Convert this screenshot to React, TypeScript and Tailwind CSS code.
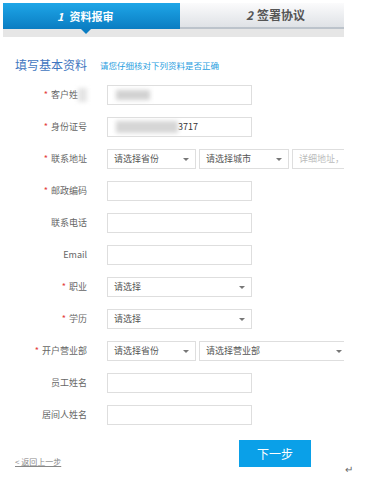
import React from "react";

const Caret = () => (
  <span className="block shrink-0 w-0 h-0 border-l-[3px] border-r-[3px] border-t-[3px] border-l-transparent border-r-transparent border-t-[#777]" />
);

const Label = ({ req, children }: { req?: boolean; children: React.ReactNode }) => (
  <div className="w-[87px] shrink-0 flex justify-end items-center text-[9px] text-[#666] whitespace-nowrap">
    {req && <span className="text-[#e4393c] mr-[3px] text-[9px]">*</span>}
    {children}
  </div>
);

const Input = ({ children }: { children?: React.ReactNode }) => (
  <div className="w-[145px] shrink-0 h-[20px] border border-[#dedede] bg-white flex items-center px-[5px] text-[9px] text-[#333] overflow-hidden whitespace-nowrap">
    {children}
  </div>
);

const Select = ({ text, w, caret = true, light }: { text: string; w: string; caret?: boolean; light?: boolean }) => (
  <div className={`${w} shrink-0 h-[20px] border border-[#dedede] bg-white flex items-center justify-between pl-[6px] pr-[6px] text-[9px] overflow-hidden whitespace-nowrap`}>
    <span className={light ? "text-[#bbb]" : "text-[#555]"}>{text}</span>
    {caret && <Caret />}
  </div>
);

const Row = ({ children }: { children: React.ReactNode }) => (
  <div className="h-[32px] flex items-center">{children}</div>
);

export default function App() {
  return (
    <div
      className="relative w-[392px] h-[480px] bg-white overflow-hidden"
      style={{ fontFamily: '"Noto Sans CJK SC", "Noto Sans", sans-serif' }}
    >
      {/* Tabs */}
      <div className="relative ml-[3px] mt-[3px] w-[341px]">
        <div className="flex h-[26px]">
          <div className="w-[177px] h-full bg-gradient-to-b from-[#1ea6e8] to-[#0a7dc2] flex items-center pl-[54px] text-white text-[11px] font-bold">
            <span className="italic mr-[6px]">1</span>
            <span>资料报审</span>
          </div>
          <div className="flex-1 h-full bg-gradient-to-b from-[#fbfbfc] to-[#dfe2e6] border-b-[2px] border-[#bcc3cb] flex items-center pl-[66px] text-[#555] text-[12px] font-bold">
            <span className="italic mr-[4px]">2</span>
            <span>签署协议</span>
          </div>
        </div>
        <div className="h-[8px] bg-[#e6e6e6]" />
        <span className="absolute left-[78px] top-[26px] w-0 h-0 border-l-[5px] border-r-[5px] border-t-[5px] border-l-transparent border-r-transparent border-t-[#0a7dc2]" />
      </div>

      {/* Heading */}
      <div className="mt-[18px] ml-[15px] h-[20px] flex items-center">
        <span className="text-[12px] text-[#3f76c0] leading-none">填写基本资料</span>
        <span className="ml-[13px] text-[8.5px] text-[#2aa0e0] leading-none">请您仔细核对下列资料是否正确</span>
      </div>

      {/* Form */}
      <div className="mt-[4px] w-[344px] overflow-hidden">
        <Row>
          <Label req>
            客户姓
            <span className="inline-block w-[9px] h-[14px] bg-[#e4e4e4] blur-[2px]" />
          </Label>
          <div className="ml-[20px]">
            <Input>
              <span className="ml-[3px] inline-block w-[34px] h-[10px] bg-[#d2d2d2] blur-[2px]" />
            </Input>
          </div>
        </Row>
        <Row>
          <Label req>身份证号</Label>
          <div className="ml-[20px]">
            <Input>
              <span className="ml-[3px] inline-block w-[62px] h-[12px] bg-[#d6d6d6] blur-[2px]" />
              <span>3717</span>
            </Input>
          </div>
        </Row>
        <Row>
          <Label req>联系地址</Label>
          <div className="ml-[20px] flex gap-[3px]">
            <Select w="w-[89px]" text="请选择省份" />
            <Select w="w-[90px]" text="请选择城市" />
            <Select w="w-[60px]" text="详细地址，不" caret={false} light />
          </div>
        </Row>
        <Row>
          <Label req>邮政编码</Label>
          <div className="ml-[20px]">
            <Input />
          </div>
        </Row>
        <Row>
          <Label>联系电话</Label>
          <div className="ml-[20px]">
            <Input />
          </div>
        </Row>
        <Row>
          <Label>Email</Label>
          <div className="ml-[20px]">
            <Input />
          </div>
        </Row>
        <Row>
          <Label req>职业</Label>
          <div className="ml-[20px]">
            <Select w="w-[145px]" text="请选择" />
          </div>
        </Row>
        <Row>
          <Label req>学历</Label>
          <div className="ml-[20px]">
            <Select w="w-[145px]" text="请选择" />
          </div>
        </Row>
        <Row>
          <Label req>开户营业部</Label>
          <div className="ml-[20px] flex gap-[3px]">
            <Select w="w-[89px]" text="请选择省份" />
            <Select w="w-[150px]" text="请选择营业部" />
          </div>
        </Row>
        <Row>
          <Label>员工姓名</Label>
          <div className="ml-[20px]">
            <Input />
          </div>
        </Row>
        <Row>
          <Label>居间人姓名</Label>
          <div className="ml-[20px]">
            <Input />
          </div>
        </Row>
      </div>

      {/* Bottom */}
      <div className="relative mt-[9px] h-[40px]">
        <span className="absolute left-[15px] top-[18px] text-[8px] text-[#888] underline leading-none">&lt; 返回上一步</span>
        <div className="absolute left-[239px] top-0 w-[72px] h-[27px] bg-[#0aa0e8] flex items-center justify-center text-white text-[12px]">
          下一步
        </div>
        <span className="absolute left-[345px] top-[24px] text-[10px] text-[#666] leading-none">↵</span>
      </div>
    </div>
  );
}
